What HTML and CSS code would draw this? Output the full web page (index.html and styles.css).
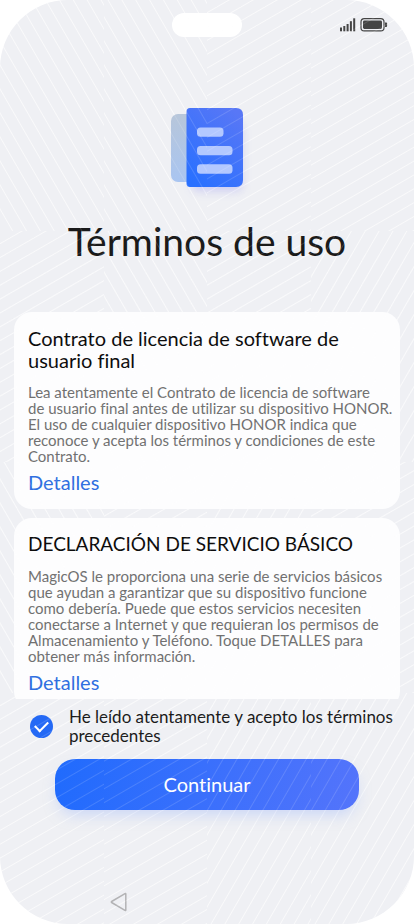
FILE: index.html
```html
<!DOCTYPE html>
<html lang="es">
<head>
<meta charset="utf-8">
<meta name="viewport" content="width=device-width, initial-scale=1">
<title>Términos de uso</title>
<link rel="stylesheet" href="styles.css">
</head>
<body>
<div class="screen">
  <div class="hatch" aria-hidden="true">
    <i class="down"></i><i class="down"></i><i class="flat"></i><i class="flat"></i>
    <i class="flat"></i><i class="down"></i><i class="flat"></i><i class="up"></i>
    <i class="down"></i><i class="flat"></i><i class="up"></i><i class="flat"></i>
    <i class="flat"></i><i class="flat"></i><i class="up"></i><i class="up"></i>
  </div>

  <header class="status">
    <span class="camera"></span>
    <svg class="indicators" width="48" height="14" viewBox="0 0 48 14" aria-hidden="true">
      <g fill="#454545">
        <rect x="0" y="9.5" width="2" height="3.8"/>
        <rect x="3.3" y="8" width="2" height="5.3"/>
        <rect x="6.6" y="6" width="2" height="7.3"/>
        <rect x="9.9" y="3.2" width="2" height="10.1"/>
        <rect x="13.2" y="0.3" width="2" height="13"/>
        <rect x="23" y="2.6" width="19" height="8.4" rx="1.4"/>
        <path d="M45 4.6h1.2q.9 0 .9.9v2.6q0 .9-.9.9H45z"/>
      </g>
      <rect x="21" y=".7" width="23" height="12.2" rx="3.2" fill="none" stroke="#454545" stroke-width="1.2"/>
    </svg>
  </header>

  <main class="content">
    <svg class="hero" width="96" height="104" viewBox="0 0 96 104" aria-hidden="true">
      <defs>
        <linearGradient id="front" x1=".8" y1="0" x2=".2" y2="1">
          <stop offset="0" stop-color="#5877f6"/><stop offset="1" stop-color="#2970ff"/>
        </linearGradient>
        <linearGradient id="back" x1="0" y1="0" x2="0" y2="1">
          <stop offset="0" stop-color="#b7c6da"/><stop offset="1" stop-color="#a9c5f1"/>
        </linearGradient>
        <filter id="blur" x="-30%" y="-30%" width="160%" height="160%"><feGaussianBlur stdDeviation="5"/></filter>
      </defs>
      <rect x="33" y="22" width="50" height="69" rx="6" fill="#8d8cf0" opacity=".35" filter="url(#blur)"/>
      <rect x="12" y="14" width="40" height="68" rx="7" fill="url(#back)"/>
      <path d="M31 8h46q7 0 7 7v65q0 7-7 7H31q-3.500 0-3.500-3.500V11.500Q27.500 8 31 8z" fill="url(#front)"/>
      <g fill="#b3c8ff">
        <rect x="38" y="27.500" width="26.500" height="9.300" rx="3.500"/>
        <rect x="38" y="46" width="35.500" height="9.300" rx="3.500"/>
        <rect x="38" y="64.300" width="35.500" height="9.500" rx="3.500"/>
      </g>
    </svg>
    <h1>Términos de uso</h1>

    <div class="cards">
      <section class="card">
        <h2>Contrato de licencia de software de usuario final</h2>
        <p>Lea atentamente el Contrato de licencia de software<br>de usuario final antes de utilizar su dispositivo HONOR.<br>El uso de cualquier dispositivo HONOR indica que<br>reconoce y acepta los términos y condiciones de este<br>Contrato.</p>
        <a href="#contrato">Detalles</a>
      </section>
      <section class="card">
        <h2 class="caps">DECLARACIÓN DE SERVICIO BÁSICO</h2>
        <p>MagicOS le proporciona una serie de servicios básicos<br>que ayudan a garantizar que su dispositivo funcione<br>como debería. Puede que estos servicios necesiten<br>conectarse a Internet y que requieran los permisos de<br>Almacenamiento y Teléfono. Toque DETALLES para<br>obtener más información.</p>
        <a href="#declaracion">Detalles</a>
      </section>
    </div>
  </main>

  <footer class="actions">
    <div class="accept">
      <input type="checkbox" id="accept" checked>
      <label for="accept">He leído atentamente y acepto los términos<br>precedentes</label>
    </div>
    <button class="primary" type="button">Continuar</button>
    <nav class="navbar">
      <button class="back" type="button" aria-label="Atrás">
        <svg width="18" height="20" viewBox="0 0 18 20" aria-hidden="true">
          <path d="M15.800 2v16q0 .8-.8.400L1.600 10.500q-.7-.5 0-1L15 1.600q.8-.4.8.4z" fill="none" stroke="#b3b3b5" stroke-width="1.500" stroke-linejoin="round"/>
        </svg>
      </button>
    </nav>
  </footer>

  <div class="hatch sheen" aria-hidden="true">
    <i class="down"></i><i class="down"></i><i class="flat"></i><i class="flat"></i>
    <i class="flat"></i><i class="down"></i><i class="flat"></i><i class="up"></i>
    <i class="down"></i><i class="flat"></i><i class="up"></i><i class="flat"></i>
    <i class="flat"></i><i class="flat"></i><i class="up"></i><i class="up"></i>
  </div>
</div>
</body>
</html>
```
FILE: styles.css
```css
* { box-sizing: border-box; }

body {
  margin: 0;
  background: #fff;
  color: #1a1a1a;
  font-family: Lato, "Noto Sans", sans-serif;
  font-variant-ligatures: none;
}

.screen {
  position: relative;
  isolation: isolate;
  display: flex;
  flex-direction: column;
  height: 100vh;
  overflow: hidden;
  border-radius: 68px;
  background: #eff0f4;
}

/* Woven line texture, one direction per tile */
.hatch {
  position: absolute;
  inset: 0;
  z-index: -1;
  display: grid;
  grid-template: repeat(4, 1fr) / repeat(4, 1fr);
  opacity: 0.6;
  pointer-events: none;
}
.hatch.sheen { z-index: 1; opacity: 0.14; }
.down { --angle: 60deg; }
.flat { --angle: 150deg; }
.up { --angle: 120deg; }
.hatch i {
  background: repeating-linear-gradient(var(--angle), transparent 0 10px, #fff 11px, transparent 12px);
}

.status {
  display: grid;
  grid-template-columns: 1fr auto 1fr;
  align-items: center;
  height: 49px;
  padding: 0 26px;
}
.camera {
  grid-column: 2;
  width: 70px;
  height: 24px;
  border-radius: 12px;
  background: #fff;
}
.indicators { justify-self: end; }

.content {
  flex: 1;
  min-height: 0;
  display: flex;
  flex-direction: column;
  padding: 51px 14px 0;
}
.hero { align-self: center; }

h1 {
  margin: 13px 0 47px;
  font-size: 39px;
  line-height: 48px;
  font-weight: 400;
  text-align: center;
}

.cards {
  flex: 1;
  min-height: 0;
  display: flex;
  flex-direction: column;
  gap: 9px;
  overflow: hidden;
}
.card {
  flex: none;
  padding: 15px 14px 16px;
  border-radius: 18px;
  background: #fdfdfe;
}
h2 {
  margin: 0 0 13px;
  color: #0c0c0c;
  font-size: 20px;
  line-height: 22px;
  font-weight: 400;
}
.caps { font-size: 19px; }
.card p {
  margin: 0 0 7px;
  color: #707070;
  font-size: 15px;
  line-height: 16px;
  white-space: nowrap;
}
.card a {
  display: block;
  color: #2f6fe0;
  font-size: 20px;
  line-height: 22px;
  text-decoration: none;
}

.actions {
  display: flex;
  flex-direction: column;
  padding-top: 8px;
}
.accept {
  display: flex;
  align-items: center;
  gap: 16px;
  padding: 0 0 0 30px;
  font-size: 17px;
  line-height: 19px;
  white-space: nowrap;
}
.accept input {
  appearance: none;
  flex: none;
  display: grid;
  place-items: center;
  width: 23px;
  height: 23px;
  margin: 0;
  border-radius: 50%;
  background: #2469f5;
}
.accept input:checked::before {
  content: "";
  width: 11px;
  height: 6px;
  margin-bottom: 3px;
  border: solid #fff;
  border-width: 0 0 2px 2px;
  transform: rotate(-45deg);
}

.primary {
  height: 51px;
  margin: 14px 55px 0;
  padding: 0 0 2px;
  border: 0;
  border-radius: 20px;
  background: linear-gradient(100deg, #206bfd, #5474fb);
  box-shadow: 0 8px 14px -3px #a9bffa80;
  color: #fff;
  font: inherit;
  font-size: 20px;
}

.navbar {
  margin-top: 70px;
  padding: 0 0 0 97px;
}
.back {
  display: grid;
  place-items: center;
  width: 44px;
  height: 44px;
  padding: 0;
  border: 0;
  background: none;
}
```
